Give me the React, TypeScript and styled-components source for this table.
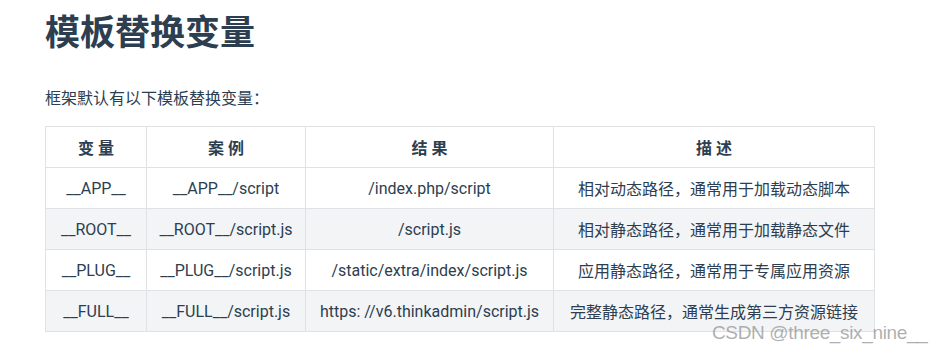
import React from "react";
import styled, { createGlobalStyle } from "styled-components";

const Global = createGlobalStyle`
  html, body { margin: 0; padding: 0; background: #fff; }
  body {
    font-family: Roboto, "Noto Sans CJK SC", sans-serif;
    color: #2c3e50;
  }
`;

const Page = styled.div`
  position: relative;
  width: 946px;
  height: 354px;
  padding: 0 45px;
  box-sizing: border-box;
  overflow: hidden;
`;

const Title = styled.h1`
  margin: 0;
  font-size: 35px;
  line-height: 60px;
  font-weight: 700;
  color: #2c3e50;
  font-family: "Noto Sans CJK SC", sans-serif;
`;

const Intro = styled.p`
  margin: 25px 0 0;
  font-size: 16px;
  line-height: 24px;
  font-family: "Noto Sans CJK SC", sans-serif;
`;

const Table = styled.table`
  margin-top: 17px;
  border-collapse: collapse;
  table-layout: fixed;
  width: 830px;
  font-size: 16px;
`;

const Row = styled.tr<{ $striped?: boolean }>`
  background: ${(p) => (p.$striped ? "#f3f4f6" : "#fff")};
`;

const Head = styled.th`
  height: 41px;
  padding: 0 12px;
  border: 1px solid #dfe2e5;
  font-weight: 700;
  text-align: center;
  box-sizing: border-box;
`;

const Cell = styled.td`
  height: 41px;
  padding: 0 12px;
  border: 1px solid #dfe2e5;
  text-align: center;
  box-sizing: border-box;
  white-space: nowrap;
`;

const Watermark = styled.div`
  position: absolute;
  left: 712px;
  top: 322px;
  font-family: "Liberation Sans", Arial, sans-serif;
  font-size: 19px;
  letter-spacing: -0.35px;
  color: rgba(140, 140, 140, 0.7);
  white-space: nowrap;
`;

const rows = [
  ["__APP__", "__APP__/script", "/index.php/script", "相对动态路径，通常用于加载动态脚本"],
  ["__ROOT__", "__ROOT__/script.js", "/script.js", "相对静态路径，通常用于加载静态文件"],
  ["__PLUG__", "__PLUG__/script.js", "/static/extra/index/script.js", "应用静态路径，通常用于专属应用资源"],
  ["__FULL__", "__FULL__/script.js", "https: //v6.thinkadmin/script.js", "完整静态路径，通常生成第三方资源链接"],
];

export default function App() {
  return (
    <>
      <Global />
      <Page>
        <Title>模板替换变量</Title>
        <Intro>框架默认有以下模板替换变量：</Intro>
        <Table>
          <colgroup>
            <col style={{ width: 101 }} />
            <col style={{ width: 159 }} />
            <col style={{ width: 248 }} />
            <col style={{ width: 321 }} />
          </colgroup>
          <thead>
            <Row>
              <Head>变 量</Head>
              <Head>案 例</Head>
              <Head>结 果</Head>
              <Head>描 述</Head>
            </Row>
          </thead>
          <tbody>
            {rows.map((r, i) => (
              <Row key={i} $striped={i % 2 === 1}>
                {r.map((c, j) => (
                  <Cell key={j}>{c}</Cell>
                ))}
              </Row>
            ))}
          </tbody>
        </Table>
        <Watermark>CSDN @three_six_nine__</Watermark>
      </Page>
    </>
  );
}
